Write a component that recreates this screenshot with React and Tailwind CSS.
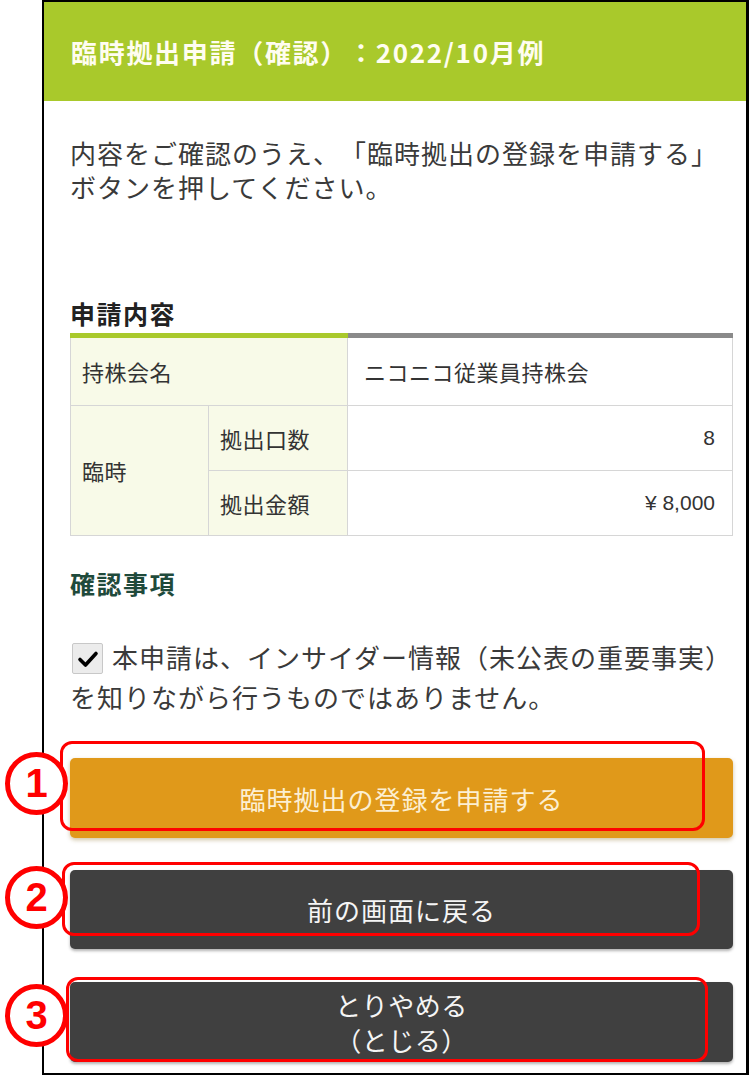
import React from "react";

function Circle({ n, top }) {
  return (
    <div
      className="absolute left-[5px] w-[63px] h-[63px] rounded-full border-[5px] border-[#ff0000] bg-white flex items-center justify-center"
      style={{ top }}
    >
      <span className="font-['Liberation_Sans',sans-serif] font-bold text-[40px] leading-none text-[#ff0000] -mt-[1px]">{n}</span>
    </div>
  );
}

export default function App() {
  return (
    <div className="relative w-[750px] h-[1076px] bg-white overflow-hidden font-['Noto_Sans_CJK_JP',sans-serif] text-[#333] [text-spacing-trim:space-all]">
      <div className="ml-[42px] w-[707px] h-[1075px] border-2 border-r-[3px] border-black flex flex-col">
        <div className="h-[99px] bg-[#a9c92b] flex items-center pl-[27px]">
          <span className="text-[#fffdf0] font-bold text-[26px] leading-none tracking-[1.7px]">臨時拠出申請（確認）：2022/10月例</span>
        </div>
        <div className="pl-[26px] pr-[13px] flex flex-col">
          <p className="mt-[35px] text-[26px] leading-[34px] tracking-[1px] text-[#3a3a3a]">
            内容をご確認のうえ、「臨時拠出の登録を申請する」<br />ボタンを押してください。
          </p>
          <h2 className="mt-[92px] text-[25px] leading-[34px] font-bold text-[#222] tracking-[1.5px]">申請内容</h2>
          <div className="mt-[3px] w-[663px] text-[22px] text-[#333]">
            <div className="flex h-[5px]">
              <div className="w-[278px] bg-[#a9c92b]" />
              <div className="flex-1 bg-[#8a8a8a]" />
            </div>
            <div className="grid grid-cols-[138px_139px_1fr] grid-rows-[67px_65px_65px] border-l border-b border-[#d6d6d6]">
              <div className="col-span-2 bg-[#f8fae8] border-r border-[#d6d6d6] flex items-center pl-[11px] tracking-[0.5px]">持株会名</div>
              <div className="flex items-center pl-[16px] border-r border-[#d6d6d6] tracking-[0.5px]">ニコニコ従業員持株会</div>
              <div className="row-span-2 bg-[#f8fae8] border-t border-r border-[#d6d6d6] flex items-center pl-[11px] tracking-[0.5px]">臨時</div>
              <div className="bg-[#f8fae8] border-t border-r border-[#d6d6d6] flex items-center pl-[11px] tracking-[0.5px]">拠出口数</div>
              <div className="border-t border-r border-[#d6d6d6] flex items-center justify-end pr-[17px] font-['Liberation_Sans',sans-serif] text-[21px]">8</div>
              <div className="bg-[#f8fae8] border-t border-r border-[#d6d6d6] flex items-center pl-[11px] tracking-[0.5px]">拠出金額</div>
              <div className="border-t border-r border-[#d6d6d6] flex items-center justify-end pr-[17px] font-['Liberation_Sans',sans-serif] text-[21px]">¥ 8,000</div>
            </div>
          </div>
          <h2 className="mt-[30px] text-[25px] leading-[34px] font-bold text-[#1f4a3b] tracking-[1.5px]">確認事項</h2>
          <p className="mt-[37px] text-[26px] leading-[40px] tracking-[1px] text-[#3a3a3a]">
            <span className="inline-flex align-middle items-center justify-center w-[31px] h-[31px] ml-[2px] mr-[9px] -mt-[4px] bg-[#ececec] border border-[#c8c8c8] rounded-[2px]">
              <svg width="22" height="18" viewBox="0 0 22 18">
                <path d="M3 9.5 L8.5 15 L19 3.5" fill="none" stroke="#000" strokeWidth="3.6" strokeLinecap="round" strokeLinejoin="round" />
              </svg>
            </span>
            本申請は、インサイダー情報（未公表の重要事実）<br />を知りながら行うものではありません。
          </p>
          <button className="mt-[41px] h-[80px] w-[663px] rounded-[5px] bg-[#e0991a] shadow-[0_2px_4px_rgba(120,90,0,0.35)] text-[#fcefd2] text-[26px] tracking-[1px] flex items-center justify-center">
            臨時拠出の登録を申請する
          </button>
          <button className="mt-[32px] h-[79px] w-[663px] rounded-[5px] bg-[#404040] shadow-[0_2px_3px_rgba(0,0,0,0.3)] text-[#f5f5f5] text-[26px] tracking-[1px] flex items-center justify-center">
            前の画面に戻る
          </button>
          <button className="mt-[33px] h-[80px] w-[663px] rounded-[5px] bg-[#404040] shadow-[0_2px_3px_rgba(0,0,0,0.3)] text-[#f5f5f5] text-[26px] leading-[35px] tracking-[0.5px] flex flex-col items-center justify-center">
            <span>とりやめる</span>
            <span>（とじる）</span>
          </button>
        </div>
      </div>

      <div className="absolute left-[60px] top-[741px] w-[645px] h-[90px] border-[3px] border-[#ff0000] rounded-[12px]" />
      <div className="absolute left-[62px] top-[862px] w-[638px] h-[74px] border-[3px] border-[#ff0000] rounded-[12px]" />
      <div className="absolute left-[66px] top-[977px] w-[642px] h-[85px] border-[3px] border-[#ff0000] rounded-[12px]" />
      <Circle n="1" top={752} />
      <Circle n="2" top={866} />
      <Circle n="3" top={984} />
    </div>
  );
}
